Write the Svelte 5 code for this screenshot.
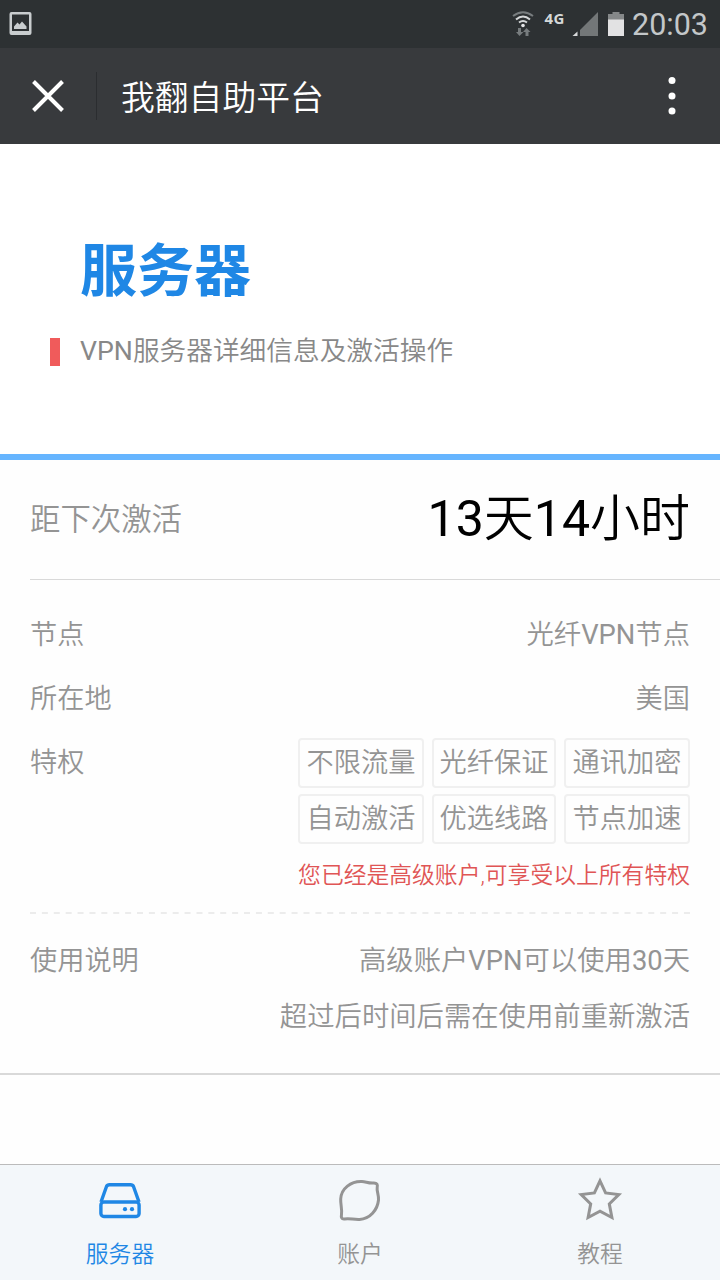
<script>
  const perks = ['不限流量', '光纤保证', '通讯加密', '自动激活', '优选线路', '节点加速'];
</script>

<div class="screen">
  <div class="status">
    <svg class="photo" width="24" height="26" viewBox="0 0 24 26">
      <path fill="#c9cdcf" fill-rule="evenodd" d="M2.500 1h18a2 2 0 0 1 2 2v19a2 2 0 0 1-2 2h-18a2 2 0 0 1-2-2V3a2 2 0 0 1 2-2zM3 3.500v16.500h17V3.500z" />
      <path fill="#c9cdcf" d="M5 18v-2.500l3.500-4 2 2 2.500-3 4.500 5V18z" />
    </svg>
    <div class="indicators">
      <svg width="124" height="48" viewBox="0 0 124 48">
        <g fill="none" stroke-width="2">
          <path stroke="#777c7e" d="M3 16Q13 8.500 23 16" />
          <path stroke="#d5d8d9" d="M6 19.500Q13 13.500 20 19.500M9 22.500Q13 19.500 17 22.500" />
        </g>
        <circle cx="13" cy="25.500" r="1.800" fill="#e4e6e7" />
        <path fill="#777c7e" d="M8 28h3v4h2.500L9.500 36 6 32h2zM15.500 36v-4H13l3.500-4 4 4h-2v4z" />
        <text x="34.500" y="24" class="net">4G</text>
        <path fill="#d8dadb" d="M62.500 36l5-4.500V36z" />
        <path fill="#737778" d="M70 36V30L88 12v24z" />
        <path fill="#858889" d="M98 20v-6h4.500v-2h7v2h4.500v6z" />
        <path fill="#e2e2e3" d="M98 19.500h16V36H98z" />
      </svg>
      <span class="clock">20:03</span>
    </div>
  </div>

  <header>
    <svg class="close" width="32" height="32" viewBox="0 0 32 32"><path d="M1.500 1.500l29 29M30.500 1.500l-29 29" stroke="#fff" stroke-width="4" /></svg>
    <i class="divider"></i>
    <h1>我翻自助平台</h1>
    <svg width="8" height="40" viewBox="0 0 8 40" fill="#fff"><circle cx="4" cy="4.500" r="3.500" /><circle cx="4" cy="20" r="3.500" /><circle cx="4" cy="35" r="3.500" /></svg>
  </header>

  <section class="hero">
    <h2>服务器</h2>
    <p><b>VPN</b>服务器详细信息及激活操作</p>
  </section>

  <main>
    <div class="countdown">
      <span>距下次激活</span>
      <strong><b>13</b>天<b>14</b>小时</strong>
    </div>
    <div class="details">
      <div class="row"><span>节点</span><span class="wide">光纤<b>VPN</b>节点</span></div>
      <div class="row"><span>所在地</span><span>美国</span></div>
      <div class="row perks">
        <span>特权</span>
        <div class="tags">
          {#each perks as perk}<span class="tag">{perk}</span>{/each}
        </div>
      </div>
      <p class="note">您已经是高级账户,可享受以上所有特权</p>
    </div>
    <svg class="dash" width="660" height="2"><path d="M0 1H660" stroke="#ececec" stroke-width="2" stroke-dasharray="6 5.890" /></svg>
    <div class="usage">
      <span>使用说明</span>
      <div class="wide">高级账户<b>VPN</b>可以使用<b>30</b>天<br />超过后时间后需在使用前重新激活</div>
    </div>
  </main>

  <nav>
    <div class="tab active">
      <svg width="46" height="46" viewBox="0 0 46 46" fill="none" stroke="currentColor" stroke-width="3.400" stroke-linejoin="round">
        <path d="M4 25L9.500 9.500Q10.300 7.700 12.500 7.700H33.500Q35.700 7.700 36.500 9.500L42 25" />
        <rect x="3.900" y="25" width="38.200" height="14.500" rx="3" />
        <g fill="currentColor" stroke="none"><circle cx="28" cy="32.200" r="2.100" /><circle cx="35" cy="32.200" r="2.100" /></g>
      </svg>
      <span>服务器</span>
    </div>
    <div class="tab">
      <svg width="46" height="46" viewBox="0 0 46 46" fill="none" stroke="currentColor" stroke-width="3" stroke-linejoin="round">
        <path d="M25 4.500C29 4.700 32 6.700 37 6C40 6 40.800 7.500 40.200 10.500C39.500 14 42 18 41.500 23C40.500 33 33 42 22.500 42.500C16 42.800 13 41 7.500 42C4.500 42.300 4 40.300 4.500 37.300C5.300 33 3.500 28 3.700 22C4.200 11.500 14 4 25 4.500Z" />
      </svg>
      <span>账户</span>
    </div>
    <div class="tab">
      <svg width="46" height="46" viewBox="0 0 46 46" fill="none" stroke="currentColor" stroke-width="3">
        <path d="M23 3.800L28.600 15.900L41.800 17.600L32.300 26.900L34.900 40.500L23 34.200L11.100 40.500L13.700 26.900L4.200 17.600L17.400 15.900Z" />
      </svg>
      <span>教程</span>
    </div>
  </nav>
</div>

<style>
  :global(body) { margin: 0; }
  .screen {
    box-sizing: border-box;
    width: 720px;
    height: 1280px;
    display: flex;
    flex-direction: column;
    overflow: hidden;
    background: #fefefe;
    color: #949494;
    font: 350 27.2px/56px Roboto, "Noto Sans CJK SC", sans-serif;
  }
  h1, h2, p { margin: 0; }
  b { font-weight: 400; }
  svg { display: block; flex: none; }
  .status {
    height: 48px;
    display: flex;
    justify-content: space-between;
    align-items: center;
    background: #2d3133;
    padding: 0 11px 0 9px;
  }
  .indicators { display: flex; align-items: center; width: 199px; }
  .net { font: 700 15px "Open Sans", sans-serif; fill: #d5d8d9; letter-spacing: .5px; }
  .clock { font-size: 30.500px; font-weight: 400; line-height: 48px; color: #c3c7c9; margin: 2px 0 0 -2px; }
  header {
    height: 96px;
    box-sizing: border-box;
    display: flex;
    align-items: center;
    background: #383a3d;
    padding: 0 44px 0 32px;
    color: #fff;
  }
  .divider { width: 1px; height: 48px; background: #2b2d30; margin: 0 24px 0 32px; }
  h1 { flex: 1; font-size: 33.800px; font-weight: 350; line-height: 48px; padding-top: 6px; }
  .hero {
    height: 316px;
    box-sizing: border-box;
    padding: 93px 50px 0;
    background: #fff;
    border-bottom: 6px solid #66b5ff;
  }
  h2 { padding-left: 30px; font-size: 57px; line-height: 70px; font-weight: 700; color: #1f87e5; }
  .hero p {
    margin-top: 31px;
    padding-left: 20px;
    border-left: 10px solid #f05b5b;
    font-size: 26.700px;
    line-height: 26px;
    padding-bottom: 2px;
    color: #888;
  }
  main { border-bottom: 2px solid #d9d9d9; height: 613px; }
  .countdown {
    height: 119px;
    margin-left: 30px;
    padding-right: 30px;
    display: flex;
    justify-content: space-between;
    align-items: center;
    border-bottom: 1px solid #d9d9d9;
    font-size: 30.400px;
  }
  strong { font-size: 50px; font-weight: 350; color: #000; padding-bottom: 2px; }
  .details { padding: 23px 30px 0; }
  .row { display: flex; justify-content: space-between; line-height: 64px; }
  .wide { font-size: 27.350px; }
  .tags {
    width: 392px;
    display: grid;
    grid-template-columns: 126px 124px 126px;
    gap: 6px 8px;
    padding-top: 7px;
  }
  .tag {
    box-sizing: border-box;
    height: 50px;
    border: 2px solid #f0f0f0;
    border-radius: 4px;
    text-align: center;
    line-height: 46px;
    white-space: nowrap;
  }
  .note { text-align: right; font-size: 22.800px; line-height: 32px; margin-top: 16px; color: #e05555; }
  .dash { margin: 20px 30px 0; }
  .usage { display: flex; justify-content: space-between; padding: 19px 30px 0; text-align: right; }
  nav {
    box-sizing: border-box;
    height: 116px;
    margin-top: auto;
    border-top: 1px solid #bbb;
    background: #f3f7fa;
    display: flex;
  }
  .tab { flex: 1; display: flex; flex-direction: column; align-items: center; padding-top: 12px; font-size: 22.800px; line-height: 32px; }
  .tab span { margin-top: 16px; }
  .active { color: #1f87e5; }
</style>
